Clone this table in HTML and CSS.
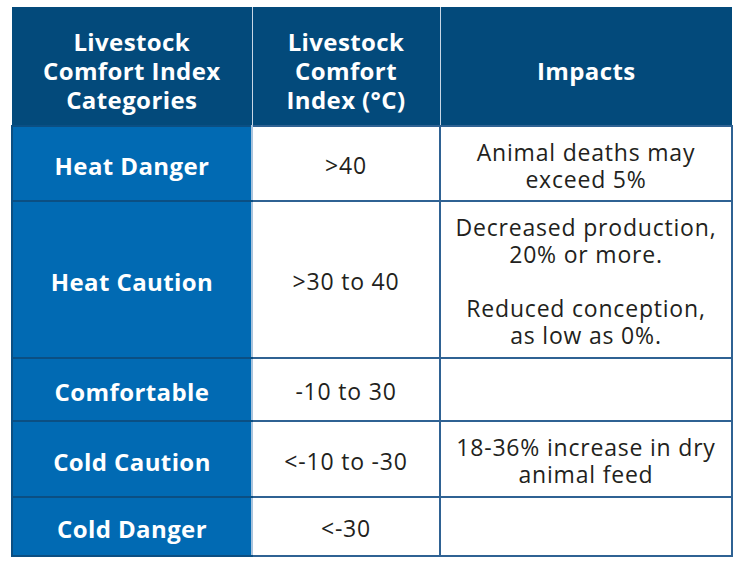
FILE: index.html
```html
<!DOCTYPE html>
<html lang="en">
<head>
<meta charset="utf-8">
<title>Livestock Comfort Index</title>
<link rel="stylesheet" href="styles.css">
</head>
<body>
<table class="lci">
  <colgroup>
    <col class="c1">
    <col class="c2">
    <col class="c3">
  </colgroup>
  <thead>
    <tr class="head">
      <th><span class="ln">Livestock</span><span class="ln">Comfort Index</span><span class="ln">Categories</span></th>
      <th><span class="ln">Livestock</span><span class="ln">Comfort</span><span class="ln">Index (°C)</span></th>
      <th><span class="ln">Impacts</span></th>
    </tr>
  </thead>
  <tbody>
    <tr class="r1">
      <th class="cat">Heat Danger</th>
      <td>&gt;40</td>
      <td><span class="ln">Animal deaths may</span><span class="ln">exceed 5%</span></td>
    </tr>
    <tr class="r2">
      <th class="cat">Heat Caution</th>
      <td>&gt;30 to 40</td>
      <td><span class="ln">Decreased production,</span><span class="ln">20% or more.</span><span class="gap"></span><span class="ln">Reduced conception,</span><span class="ln">as low as 0%.</span></td>
    </tr>
    <tr class="r3">
      <th class="cat">Comfortable</th>
      <td>-10 to 30</td>
      <td></td>
    </tr>
    <tr class="r4">
      <th class="cat">Cold Caution</th>
      <td>&lt;-10 to -30</td>
      <td><span class="ln">18-36% increase in dry</span><span class="ln">animal feed</span></td>
    </tr>
    <tr class="r5">
      <th class="cat">Cold Danger</th>
      <td>&lt;-30</td>
      <td></td>
    </tr>
  </tbody>
</table>
</body>
</html>
```

FILE: styles.css
```css
html, body {
  margin: 0;
  padding: 0;
  background: #ffffff;
}

body {
  padding: 7px 0 0 11px;
  font-family: "Open Sans", Lato, sans-serif;
}

.lci {
  border-collapse: collapse;
  width: 720px;
  table-layout: fixed;
  color: #231f20;
}

.c1 { width: 240px; }
.c2 { width: 188px; }
.c3 { width: 292px; }

.lci th,
.lci td {
  text-align: center;
  vertical-align: middle;
  padding: 4px 2px 0;
  font-size: 23px;
  letter-spacing: 0.8px;
  line-height: 27px;
  white-space: nowrap;
}

.ln {
  display: block;
  height: 27px;
  line-height: 27px;
  overflow: visible;
}

.lci td {
  border: 2px solid #2f6293;
  font-weight: 400;
}

.head th {
  background: #034a7b;
  color: #ffffff;
  font-weight: 700;
  font-size: 24px;
  letter-spacing: 0.4px;
  line-height: 29px;
  padding-top: 8px;
  height: 110px;
  border: 0;
  border-left: 1px solid #c9d7e6;
}

.head .ln {
  height: 29px;
  line-height: 29px;
}

.head th:first-child {
  border-left: 0;
}

.lci .cat {
  background: #016ab3;
  color: #ffffff;
  font-weight: 700;
  font-size: 24px;
  letter-spacing: 0.4px;
  border: 2px solid #0b4f83;
  border-right: 2px solid #a9c3dc;
}

.r1 th, .r1 td { height: 69px; }
.r2 th, .r2 td { height: 151px; }
.r3 th, .r3 td { height: 57px; }
.r4 th, .r4 td { height: 70px; }
.r5 th, .r5 td { height: 53px; }

.gap {
  display: block;
  height: 27px;
}
```
